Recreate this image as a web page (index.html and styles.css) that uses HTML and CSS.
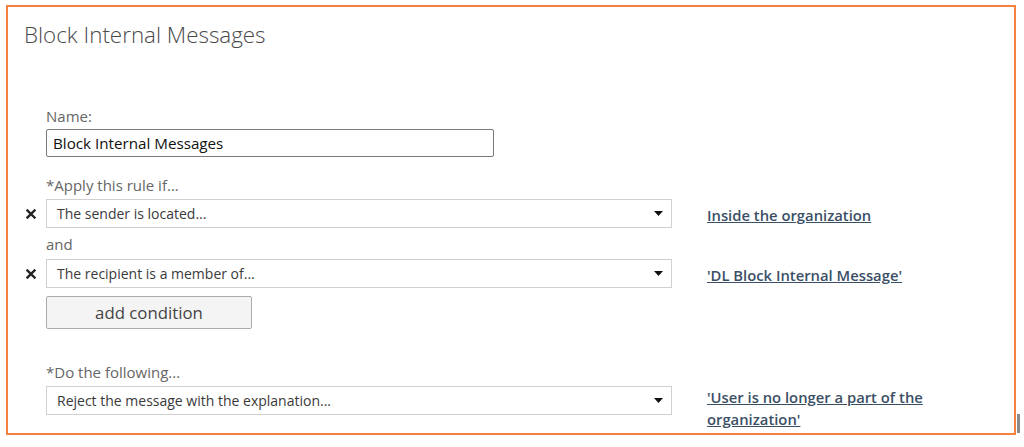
FILE: index.html
```html
<!DOCTYPE html>
<html lang="en">
<head>
<meta charset="utf-8">
<title>Block Internal Messages</title>
<link rel="stylesheet" href="styles.css">
</head>
<body>
<div class="page">
  <div class="frame">
    <h1 class="title">Block Internal Messages</h1>
    <div class="form">
      <div class="row label-row name-label"><span class="lead"></span><span class="label">Name:</span></div>
      <div class="row"><span class="lead"></span><div class="textbox">Block Internal Messages</div></div>

      <div class="row label-row apply-label"><span class="lead"></span><span class="label">*Apply this rule if...</span></div>
      <div class="row sel-row">
        <span class="lead"><svg class="xmark" viewBox="0 0 10 10" width="10" height="10"><path d="M1.5 1.5L8.5 8.5M8.5 1.5L1.5 8.5" stroke="#222" stroke-width="2.4" stroke-linecap="square"/></svg></span>
        <div class="select"><span>The sender is located...</span><svg class="arrow" viewBox="0 0 9 5" width="9" height="5"><path d="M0 0H9L4.5 5Z" fill="#111"/></svg></div>
        <a class="link" href="#">Inside the organization</a>
      </div>
      <div class="row label-row and-label"><span class="lead"></span><span class="label">and</span></div>
      <div class="row sel-row">
        <span class="lead"><svg class="xmark" viewBox="0 0 10 10" width="10" height="10"><path d="M1.5 1.5L8.5 8.5M8.5 1.5L1.5 8.5" stroke="#222" stroke-width="2.4" stroke-linecap="square"/></svg></span>
        <div class="select"><span>The recipient is a member of...</span><svg class="arrow" viewBox="0 0 9 5" width="9" height="5"><path d="M0 0H9L4.5 5Z" fill="#111"/></svg></div>
        <a class="link" href="#">'DL Block Internal Message'</a>
      </div>
      <div class="row btn-row"><span class="lead"></span><button class="button" type="button">add condition</button></div>

      <div class="row label-row do-label"><span class="lead"></span><span class="label">*Do the following...</span></div>
      <div class="row sel-row top">
        <span class="lead"></span>
        <div class="select"><span>Reject the message with the explanation...</span><svg class="arrow" viewBox="0 0 9 5" width="9" height="5"><path d="M0 0H9L4.5 5Z" fill="#111"/></svg></div>
        <a class="link two-line" href="#">'User is no longer a part of the organization'</a>
      </div>
    </div>
  </div>
  <div class="edge"></div>
</div>
</body>
</html>
```

FILE: styles.css
```css
html, body {
  margin: 0;
  padding: 0;
  background: #ffffff;
}

body {
  font-family: "Open Sans", "Noto Sans", sans-serif;
  color: #333;
  width: 1024px;
  height: 447px;
  overflow: hidden;
}

.page {
  display: flex;
  align-items: flex-end;
  padding: 5px 0 0 6px;
}

.frame {
  width: 1006px;
  height: 426px;
  border: 2px solid #f5803f;
  box-sizing: content-box;
  overflow: hidden;
}

.edge {
  width: 3px;
  height: 19px;
  background: #8a8a8a;
  margin: 0 0 2px 1px;
}

.title {
  margin: 0;
  padding: 14px 0 0 16px;
  font-weight: 300;
  font-size: 22.4px;
  line-height: 28px;
  color: #4a4a4a;
}

.form {
  display: flex;
  flex-direction: column;
}

.row {
  display: flex;
  align-items: center;
}

.row.top {
  align-items: flex-start;
}

.lead {
  flex: 0 0 38px;
  width: 38px;
  display: flex;
  justify-content: flex-end;
  padding-right: 10px;
  box-sizing: border-box;
}

.xmark {
  display: block;
}

.label {
  font-size: 15px;
  line-height: 20px;
  color: #666;
}

.name-label { margin-top: 57px; }
.apply-label { margin-top: 18px; }
.and-label { margin-top: 6px; }
.do-label { margin-top: 33px; }

.name-label + .row { margin-top: 3px; }

.textbox {
  width: 448px;
  height: 28px;
  box-sizing: border-box;
  border: 1px solid #7a7a7a;
  border-radius: 2px;
  padding: 0 6px;
  font-size: 15.2px;
  line-height: 26px;
  color: #111;
}

.sel-row { margin-top: 4px; }
.and-label + .sel-row { margin-top: 5px; }

.select {
  width: 626px;
  height: 29px;
  box-sizing: border-box;
  border: 1px solid #d0d0d0;
  display: flex;
  align-items: center;
  justify-content: space-between;
  padding: 0 8px 0 10px;
  font-size: 14px;
  color: #3a3a3a;
}

.arrow {
  display: block;
}

.link {
  margin-left: 35px;
  padding-top: 3px;
  font-size: 14.8px;
  font-weight: 600;
  color: #3b4f66;
  text-decoration: underline;
  line-height: 22px;
}

.link.two-line {
  width: 250px;
  padding-top: 0;
  margin-top: 0;
}

.btn-row { margin-top: 8px; }

.button {
  width: 206px;
  height: 33px;
  box-sizing: border-box;
  border: 1px solid #ababab;
  border-radius: 2px;
  background: #f4f4f4;
  font-family: "Open Sans", "Noto Sans", sans-serif;
  font-size: 16.8px;
  color: #444;
  padding: 0;
}
```
